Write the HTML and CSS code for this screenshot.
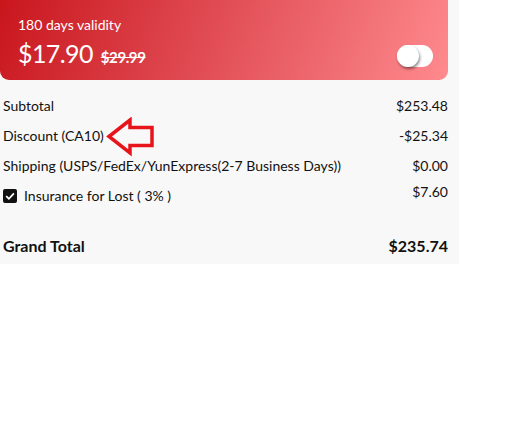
FILE: index.html
```html
<!DOCTYPE html>
<html>
<head>
<meta charset="utf-8">
<link rel="stylesheet" href="styles.css">
</head>
<body>
<div class="panel">
  <div class="card">
    <div class="validity">180 days validity</div>
    <div class="price-row">
      <div class="prices">
        <span class="price">$17.90</span>
        <span class="old">$29.99</span>
      </div>
      <div class="toggle"><span class="knob"></span></div>
    </div>
  </div>
  <div class="rows">
    <div class="row"><span>Subtotal</span><span>$253.48</span></div>
    <div class="row discount">
      <span class="label">Discount (CA10)
        <svg class="arrow" width="50" height="40" viewBox="0 0 50 40">
          <path d="M3 19.5 L24 3 L24 10.5 L46 10.5 L46 28.5 L24 28.5 L24 36 Z" fill="none" stroke="#e8141c" stroke-width="3.5" stroke-linejoin="miter"/>
        </svg>
      </span>
      <span>-$25.34</span>
    </div>
    <div class="row"><span>Shipping (USPS/FedEx/YunExpress(2-7 Business Days))</span><span>$0.00</span></div>
    <div class="row insurance">
      <span class="check-label"><span class="checkbox"><svg width="14" height="14" viewBox="0 0 14 14"><path d="M3.2 7.2 L5.9 9.8 L10.9 4.4" fill="none" stroke="#fff" stroke-width="1.8"/></svg></span>Insurance for Lost ( 3% )</span>
      <span class="ins-val">$7.60</span>
    </div>
    <div class="row total"><span>Grand Total</span><span>$235.74</span></div>
  </div>
</div>
</body>
</html>
```

FILE: styles.css
```css
* { box-sizing: border-box; }
body {
  margin: 0;
  background: #fff;
  font-family: "Lato", "Noto Sans", sans-serif;
  color: #111;
}
.panel {
  width: 459px;
  margin-top: 4px;
  background: #f8f8f8;
  padding-bottom: 4px;
}
.card {
  margin-top: -4px;
  width: 448px;
  height: 80px;
  border-radius: 0 0 9px 9px;
  background: linear-gradient(110deg, #c9161d 0%, #e04a52 45%, #f27378 80%, #ff8a8e 100%);
  color: #fff;
  padding: 16px 15px 0 18px;
}
.validity {
  font-size: 14px;
  line-height: 18px;
}
.price-row {
  display: flex;
  justify-content: space-between;
  align-items: center;
  margin-top: 4px;
}
.prices {
  display: flex;
  align-items: baseline;
  gap: 8px;
}
.price {
  font-size: 25px;
  line-height: 30px;
  letter-spacing: -0.6px;
}
.old {
  font-size: 15px;
  font-weight: 700;
  letter-spacing: -0.4px;
  text-decoration: line-through;
}
.toggle {
  width: 36px;
  height: 22px;
  border-radius: 11px;
  background: #fff;
  position: relative;
  margin-top: 6px;
}
.knob {
  position: absolute;
  left: 0;
  top: 0;
  width: 22px;
  height: 22px;
  border-radius: 50%;
  background: #fff;
  box-shadow: 1px 2px 3px rgba(0,0,0,0.45);
}
.rows {
  padding: 10px 11px 0 3px;
}
.row {
  display: flex;
  justify-content: space-between;
  align-items: center;
  font-size: 14px;
  height: 30px;
}
.label {
  position: relative;
}
.arrow {
  position: absolute;
  left: 103px;
  top: -10px;
}
.insurance {
  align-items: flex-start;
  padding-top: 7px;
}
.check-label {
  display: flex;
  align-items: center;
  gap: 7px;
}
.checkbox {
  width: 14px;
  height: 14px;
  background: #111;
  border-radius: 2px;
  display: flex;
}
.ins-val {
  margin-top: -4px;
}
.total {
  margin-top: 20px;
  font-weight: 700;
  font-size: 16px;
}
```
